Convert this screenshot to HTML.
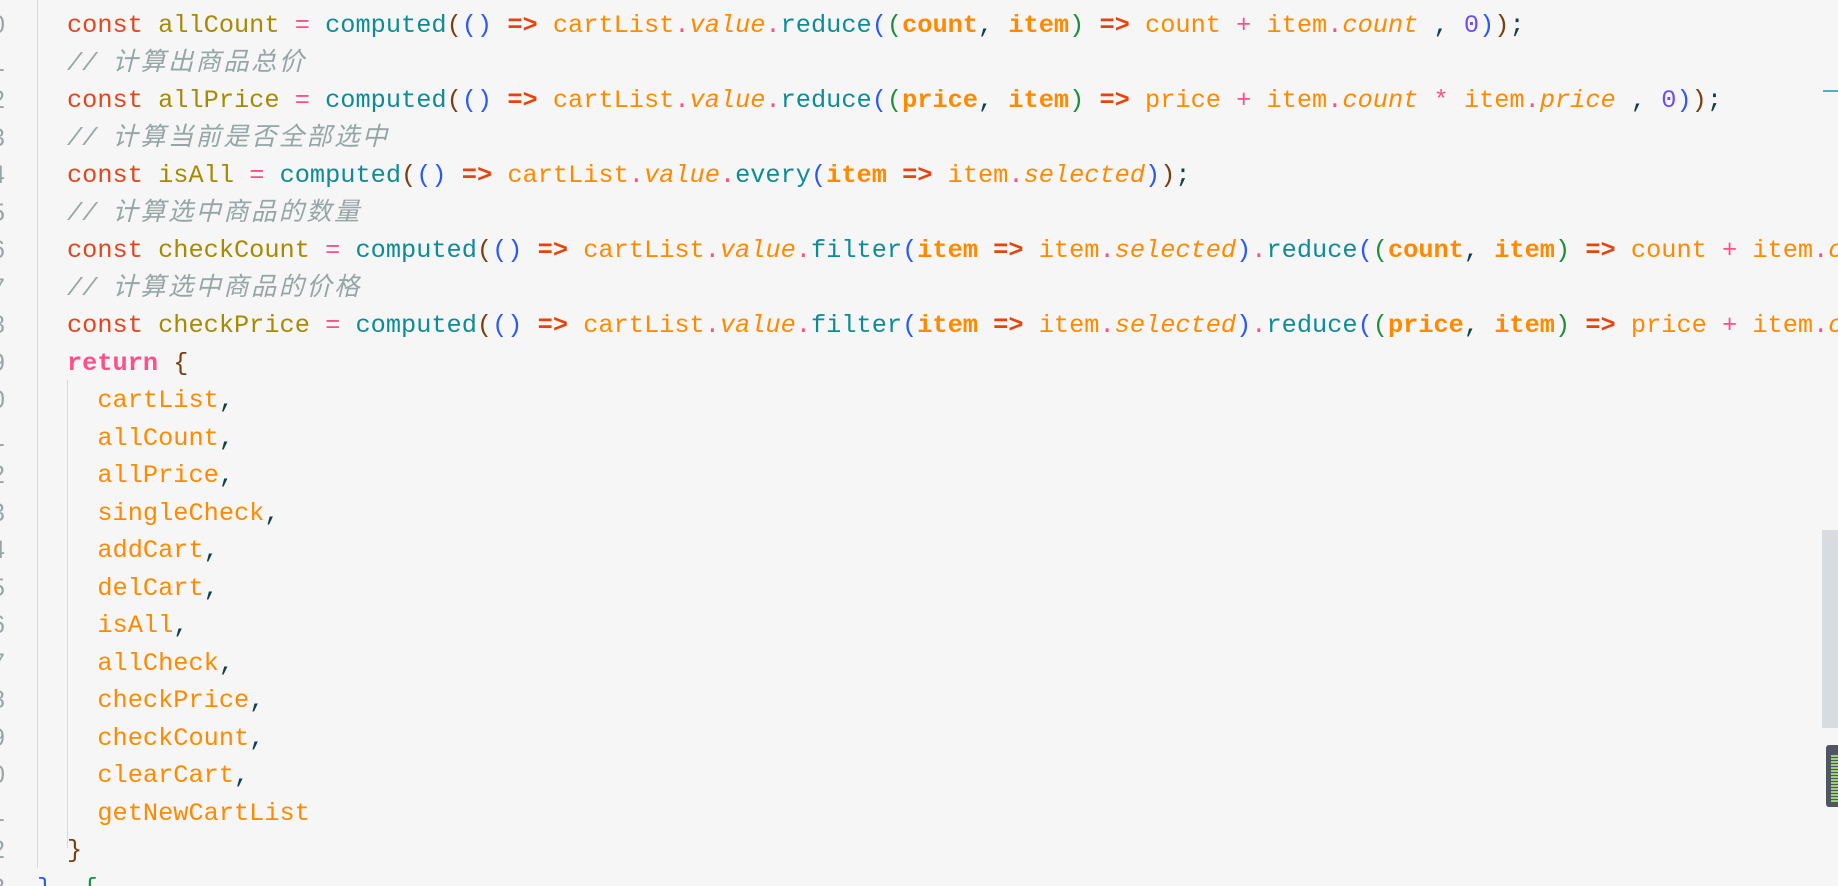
<!DOCTYPE html>
<html><head><meta charset="utf-8"><style>
html,body{margin:0;padding:0;width:1838px;height:886px;overflow:hidden;background:#f5f6f5;}
.ed{position:absolute;left:0;top:0;width:1838px;height:886px;overflow:hidden;font-family:"Liberation Mono","Noto Sans CJK SC",monospace;font-size:25.3px;}
.l{position:absolute;left:67px;height:37.5px;line-height:37.5px;white-space:pre;}
.ln{position:absolute;left:-9px;color:#9aa5a8;white-space:pre;line-height:37.5px;font-size:25px;font-family:"Liberation Sans",sans-serif;}
.k{color:#e2461f}.v{color:#a88a00}.f{color:#0e8c96}.op{color:#ff4f8b}.ar{color:#e8430d;font-weight:bold}
.o{color:#ff8a00}.i{font-style:italic}.b{font-weight:bold}.d{color:#ff4f8b}
.c{color:#96a6a6;font-style:italic}.cj{letter-spacing:2.4px}
.p1{color:#7a3e10}.p2{color:#2c58f5}.p3{color:#1c8f3a}.n{color:#6f4ef0}.s{color:#10404d}
.g{position:absolute;width:1px;background:#d4dcdf}
</style></head><body><div class="ed">
<div class="g" style="left:37px;top:0;height:868px"></div>
<div class="g" style="left:67px;top:380px;height:468px"></div>
<div class="ln" style="top:7px">0</div><div class="ln" style="top:44.5px">1</div><div class="ln" style="top:82px">2</div><div class="ln" style="top:119.5px">3</div><div class="ln" style="top:157px">4</div><div class="ln" style="top:194.5px">5</div><div class="ln" style="top:232px">6</div><div class="ln" style="top:269.5px">7</div><div class="ln" style="top:307px">8</div><div class="ln" style="top:344.5px">9</div><div class="ln" style="top:382px">0</div><div class="ln" style="top:419.5px">1</div><div class="ln" style="top:457px">2</div><div class="ln" style="top:494.5px">3</div><div class="ln" style="top:532px">4</div><div class="ln" style="top:569.5px">5</div><div class="ln" style="top:607px">6</div><div class="ln" style="top:644.5px">7</div><div class="ln" style="top:682px">8</div><div class="ln" style="top:719.5px">9</div><div class="ln" style="top:757px">0</div><div class="ln" style="top:794.5px">1</div><div class="ln" style="top:832px">2</div><div class="ln" style="top:869.5px">3</div>
<div class="l" style="top:-30px"><span class="c">// <span class="cj">计算出商品数量</span></span></div>
<div class="l" style="top:7px"><span class="k">const</span> <span class="v">allCount</span> <span class="op">=</span> <span class="f">computed</span><span class="p1">(</span><span class="p2">()</span> <span class="ar">=&gt;</span> <span class="o">cartList<span class="d">.</span><span class="i">value</span><span class="d">.</span></span><span class="f">reduce</span><span class="p2">(</span><span class="p3">(</span><span class="o b">count</span><span class="s">,</span> <span class="o b">item</span><span class="p3">)</span> <span class="ar">=&gt;</span> <span class="o">count</span> <span class="op">+</span> <span class="o">item<span class="d">.</span><span class="i">count</span></span> <span class="s">,</span> <span class="n">0</span><span class="p2">)</span><span class="p1">)</span><span class="s">;</span></div>
<div class="l" style="top:44.5px"><span class="c">// <span class="cj">计算出商品总价</span></span></div>
<div class="l" style="top:82px"><span class="k">const</span> <span class="v">allPrice</span> <span class="op">=</span> <span class="f">computed</span><span class="p1">(</span><span class="p2">()</span> <span class="ar">=&gt;</span> <span class="o">cartList<span class="d">.</span><span class="i">value</span><span class="d">.</span></span><span class="f">reduce</span><span class="p2">(</span><span class="p3">(</span><span class="o b">price</span><span class="s">,</span> <span class="o b">item</span><span class="p3">)</span> <span class="ar">=&gt;</span> <span class="o">price</span> <span class="op">+</span> <span class="o">item<span class="d">.</span><span class="i">count</span></span> <span class="op">*</span> <span class="o">item<span class="d">.</span><span class="i">price</span></span> <span class="s">,</span> <span class="n">0</span><span class="p2">)</span><span class="p1">)</span><span class="s">;</span></div>
<div class="l" style="top:119.5px"><span class="c">// <span class="cj">计算当前是否全部选中</span></span></div>
<div class="l" style="top:157px"><span class="k">const</span> <span class="v">isAll</span> <span class="op">=</span> <span class="f">computed</span><span class="p1">(</span><span class="p2">()</span> <span class="ar">=&gt;</span> <span class="o">cartList<span class="d">.</span><span class="i">value</span><span class="d">.</span></span><span class="f">every</span><span class="p2">(</span><span class="o b">item</span> <span class="ar">=&gt;</span> <span class="o">item<span class="d">.</span><span class="i">selected</span></span><span class="p2">)</span><span class="p1">)</span><span class="s">;</span></div>
<div class="l" style="top:194.5px"><span class="c">// <span class="cj">计算选中商品的数量</span></span></div>
<div class="l" style="top:232px"><span class="k">const</span> <span class="v">checkCount</span> <span class="op">=</span> <span class="f">computed</span><span class="p1">(</span><span class="p2">()</span> <span class="ar">=&gt;</span> <span class="o">cartList<span class="d">.</span><span class="i">value</span><span class="d">.</span></span><span class="f">filter</span><span class="p2">(</span><span class="o b">item</span> <span class="ar">=&gt;</span> <span class="o">item<span class="d">.</span><span class="i">selected</span></span><span class="p2">)</span><span class="d">.</span><span class="f">reduce</span><span class="p2">(</span><span class="p3">(</span><span class="o b">count</span><span class="s">,</span> <span class="o b">item</span><span class="p3">)</span> <span class="ar">=&gt;</span> <span class="o">count</span> <span class="op">+</span> <span class="o">item<span class="d">.</span><span class="i">count</span></span><span class="s">,</span> <span class="n">0</span><span class="p2">)</span><span class="p1">)</span><span class="s">;</span></div>
<div class="l" style="top:269.5px"><span class="c">// <span class="cj">计算选中商品的价格</span></span></div>
<div class="l" style="top:307px"><span class="k">const</span> <span class="v">checkPrice</span> <span class="op">=</span> <span class="f">computed</span><span class="p1">(</span><span class="p2">()</span> <span class="ar">=&gt;</span> <span class="o">cartList<span class="d">.</span><span class="i">value</span><span class="d">.</span></span><span class="f">filter</span><span class="p2">(</span><span class="o b">item</span> <span class="ar">=&gt;</span> <span class="o">item<span class="d">.</span><span class="i">selected</span></span><span class="p2">)</span><span class="d">.</span><span class="f">reduce</span><span class="p2">(</span><span class="p3">(</span><span class="o b">price</span><span class="s">,</span> <span class="o b">item</span><span class="p3">)</span> <span class="ar">=&gt;</span> <span class="o">price</span> <span class="op">+</span> <span class="o">item<span class="d">.</span><span class="i">count</span></span> <span class="op">*</span> <span class="o">item<span class="d">.</span><span class="i">price</span></span><span class="s">,</span> <span class="n">0</span><span class="p2">)</span><span class="p1">)</span><span class="s">;</span></div>
<div class="l" style="top:344.5px"><span style="color:#ff4f8b;font-weight:bold">return</span> <span class="p1">{</span></div>
<div class="l" style="top:382px">  <span class="o">cartList</span><span class="s">,</span></div>
<div class="l" style="top:419.5px">  <span class="o">allCount</span><span class="s">,</span></div>
<div class="l" style="top:457px">  <span class="o">allPrice</span><span class="s">,</span></div>
<div class="l" style="top:494.5px">  <span class="o">singleCheck</span><span class="s">,</span></div>
<div class="l" style="top:532px">  <span class="o">addCart</span><span class="s">,</span></div>
<div class="l" style="top:569.5px">  <span class="o">delCart</span><span class="s">,</span></div>
<div class="l" style="top:607px">  <span class="o">isAll</span><span class="s">,</span></div>
<div class="l" style="top:644.5px">  <span class="o">allCheck</span><span class="s">,</span></div>
<div class="l" style="top:682px">  <span class="o">checkPrice</span><span class="s">,</span></div>
<div class="l" style="top:719.5px">  <span class="o">checkCount</span><span class="s">,</span></div>
<div class="l" style="top:757px">  <span class="o">clearCart</span><span class="s">,</span></div>
<div class="l" style="top:794.5px">  <span class="o">getNewCartList</span></div>
<div class="l" style="top:832px"><span class="p1">}</span></div>
<div class="l" style="top:869.5px;left:37px"><span class="p2">}</span><span class="s">,</span> <span class="p3">{</span></div>
<div style="position:absolute;left:1823px;top:90px;width:15px;height:2px;background:#4bb3c8"></div>
<div style="position:absolute;left:1822px;top:530px;width:16px;height:198px;background:#d6dcdf"></div>
<div style="position:absolute;left:1826px;top:745px;width:12px;height:62px;background:#4f5561;border-radius:3px 0 0 3px"></div>
<div style="position:absolute;left:1831px;top:755px;width:7px;height:48px;background:repeating-linear-gradient(#9ad07a 0 2px,#4f5561 2px 3px)"></div>
</div></body></html>
